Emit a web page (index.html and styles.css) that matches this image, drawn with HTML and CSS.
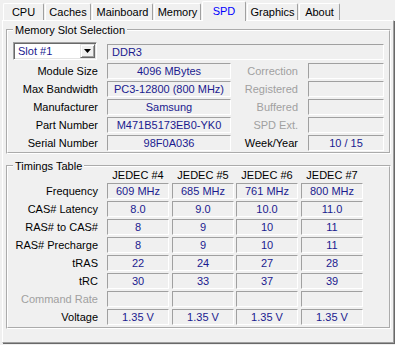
FILE: index.html
```html
<!DOCTYPE html>
<html>
<head>
  <title>CPU-Z SPD</title>
  <link rel="stylesheet" href="styles.css">
</head>
<body>
  <div class="window">
    <div class="tabs">
      <div class="tab">CPU</div>
      <div class="tab">Caches</div>
      <div class="tab">Mainboard</div>
      <div class="tab">Memory</div>
      <div class="tab active">SPD</div>
      <div class="tab">Graphics</div>
      <div class="tab">About</div>
    </div>
    <div class="panel">
      <fieldset class="group slot-group">
        <legend>Memory Slot Selection</legend>
        <div class="slot-grid">
          <div class="combo">
            <span class="combo-text">Slot #1</span>
            <span class="combo-btn">
              <svg width="7" height="4" viewBox="0 0 7 4"><polygon points="0,0 7,0 3.5,4" fill="#000"/></svg>
            </span>
          </div>
          <div class="field wide">DDR3</div>

          <div class="label">Module Size</div>
          <div class="field">4096 MBytes</div>
          <div class="label side off">Correction</div>
          <div class="field"></div>

          <div class="label">Max Bandwidth</div>
          <div class="field">PC3-12800 (800 MHz)</div>
          <div class="label side off">Registered</div>
          <div class="field"></div>

          <div class="label">Manufacturer</div>
          <div class="field">Samsung</div>
          <div class="label side off">Buffered</div>
          <div class="field"></div>

          <div class="label">Part Number</div>
          <div class="field">M471B5173EB0-YK0</div>
          <div class="label side off">SPD Ext.</div>
          <div class="field"></div>

          <div class="label">Serial Number</div>
          <div class="field">98F0A036</div>
          <div class="label side">Week/Year</div>
          <div class="field">10 / 15</div>
        </div>
      </fieldset>

      <fieldset class="group timing-group">
        <legend>Timings Table</legend>
        <div class="timing-grid">
          <div></div>
          <div class="head">JEDEC #4</div>
          <div class="head">JEDEC #5</div>
          <div class="head">JEDEC #6</div>
          <div class="head">JEDEC #7</div>

          <div class="label">Frequency</div>
          <div class="field">609 MHz</div>
          <div class="field">685 MHz</div>
          <div class="field">761 MHz</div>
          <div class="field">800 MHz</div>

          <div class="label">CAS# Latency</div>
          <div class="field">8.0</div>
          <div class="field">9.0</div>
          <div class="field">10.0</div>
          <div class="field">11.0</div>

          <div class="label">RAS# to CAS#</div>
          <div class="field">8</div>
          <div class="field">9</div>
          <div class="field">10</div>
          <div class="field">11</div>

          <div class="label">RAS# Precharge</div>
          <div class="field">8</div>
          <div class="field">9</div>
          <div class="field">10</div>
          <div class="field">11</div>

          <div class="label">tRAS</div>
          <div class="field">22</div>
          <div class="field">24</div>
          <div class="field">27</div>
          <div class="field">28</div>

          <div class="label">tRC</div>
          <div class="field">30</div>
          <div class="field">33</div>
          <div class="field">37</div>
          <div class="field">39</div>

          <div class="label off">Command Rate</div>
          <div class="field"></div>
          <div class="field"></div>
          <div class="field"></div>
          <div class="field"></div>

          <div class="label">Voltage</div>
          <div class="field">1.35 V</div>
          <div class="field">1.35 V</div>
          <div class="field">1.35 V</div>
          <div class="field">1.35 V</div>
        </div>
      </fieldset>
    </div>
  </div>
</body>
</html>
```

FILE: styles.css
```css
:root {
  --face: #f0f0f0;
  --shadow: #a0a0a0;
  --dark-shadow: #696969;
  --value: #1a1a8f;
  --disabled: #a0a0a0;
}

body {
  margin: 0;
  background: var(--face);
  font-family: "Liberation Sans", Arial, sans-serif;
  font-size: 11px;
  color: #000;
}

.window {
  width: 395px;
  height: 345px;
  overflow: hidden;
}

/* tab strip */

.tabs {
  display: flex;
  align-items: flex-end;
  height: 20px;
  padding-left: 3px;
}

.tab {
  box-sizing: border-box;
  height: 17px;
  margin-right: 1px;
  border-top: 1px solid #fff;
  border-left: 1px solid #fff;
  border-right: 1px solid var(--shadow);
  border-radius: 2px 2px 0 0;
  text-align: center;
  line-height: 16px;
  white-space: nowrap;
}

.tab:nth-child(1) { width: 41px; }
.tab:nth-child(2) { width: 46px; }
.tab:nth-child(3) { width: 61px; }
.tab:nth-child(4) { width: 47px; }
.tab:nth-child(5) { width: 44px; }
.tab:nth-child(6) { width: 51px; }
.tab:nth-child(7) { width: 41px; }

.tab.active {
  height: 20px;
  margin-bottom: -1px;
  line-height: 18px;
  color: #0000ff;
  background: var(--face);
  position: relative;
  z-index: 1;
}

/* page */

.panel {
  box-sizing: border-box;
  margin-left: 2px;
  width: 392px;
  height: 323px;
  border: 1px solid;
  border-color: #fff var(--shadow) var(--shadow) #fff;
  box-shadow: 1px 1px 0 var(--dark-shadow);
  padding: 3px 2px 0 3px;
}

.group {
  margin: 0;
  padding: 0;
  min-width: 0;
  border: 2px groove #fff;
}

.group legend {
  margin-left: 5px;
  padding: 0 2px;
  line-height: 12px;
}

.timing-group {
  margin-top: 6px;
}

/* slot selection */

.slot-grid {
  display: grid;
  grid-template-columns: 99px 124px 77px 76px;
  grid-template-rows: 19px repeat(5, 16px);
  row-gap: 2px;
  padding: 6px 0 1px 0;
}

.combo {
  box-sizing: border-box;
  display: flex;
  width: 84px;
  height: 18px;
  margin-left: 5px;
  background: #fff;
  border: 1px solid;
  border-color: var(--shadow) #fff #fff var(--shadow);
  box-shadow: inset 1px 1px 0 var(--dark-shadow), inset -1px -1px 0 #e3e3e3;
  padding: 1px;
}

.combo-text {
  flex: 1;
  padding-left: 3px;
  line-height: 14px;
  color: var(--value);
}

.combo-btn {
  box-sizing: border-box;
  display: flex;
  align-items: center;
  justify-content: center;
  width: 15px;
  height: 14px;
  background: var(--face);
  border: 1px solid;
  border-color: #e3e3e3 var(--dark-shadow) var(--dark-shadow) #e3e3e3;
  box-shadow: inset 1px 1px 0 #fff, inset -1px -1px 0 var(--shadow);
}

.field {
  box-sizing: border-box;
  height: 16px;
  border: 1px solid;
  border-color: var(--shadow) #fff #fff var(--shadow);
  color: var(--value);
  text-align: center;
  line-height: 14px;
  white-space: nowrap;
  overflow: hidden;
}

.field.wide {
  grid-column: 2 / 5;
  align-self: center;
  text-align: left;
  padding-left: 4px;
}

.label {
  text-align: right;
  padding-right: 9px;
  line-height: 16px;
  white-space: nowrap;
}

.label.side {
  padding-right: 10px;
}

.label.off {
  color: var(--disabled);
}

/* timings */

.timing-grid {
  display: grid;
  grid-template-columns: 99px 65px 64px 65px 62px;
  grid-template-rows: 12px repeat(8, 16px);
  row-gap: 2px;
  margin-top: -3px;
  padding-bottom: 2px;
}

.timing-grid .field,
.timing-grid .head {
  width: 62px;
}

.head {
  text-align: center;
  line-height: 12px;
  white-space: nowrap;
}
```
